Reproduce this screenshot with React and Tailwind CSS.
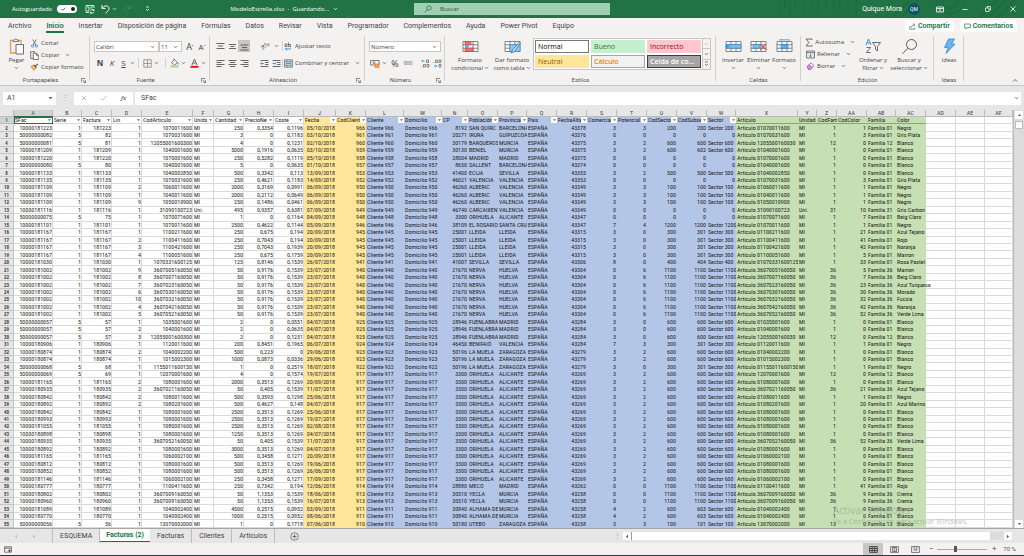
import React from "react";

const COLORS = {
  0: "Blanco", 1: "Negro", 3: "Gris Plata", 5: "Marron", 7: "Beig Claro", 9: "Crema",
  10: "Gris Carbon", 20: "Azul Marino", 21: "Azul Tejano", 23: "Azul Turquesa", 30: "Morado",
  32: "Fucsia", 33: "Rosa Pastel", 41: "Rojo", 42: "Naranja", 52: "Verde Lima",
};

// code: CP | city | province | date serial | comercial | potencial | sector | subsector
const CLIENTS = {
  966: "8192|SAN QUIRC|BARCELONA|43378|3|3|200|200",
  961: "20271|IRURA|GUIPUZCOA|43376|0|0|0|0",
  960: "30179|BARQUEROS|MURCIA|43375|3|2|600|600",
  959: "30130|BENIEL|MURCIA|43375|3|2|600|602",
  958: "28004|MADRID|MADRID|43375|0|0|0|0",
  957: "8650|SALLENT|BARCELONA|43374|0|0|0|0",
  953: "41400|ECIJA|SEVILLA|43355|3|2|500|500",
  952: "46021|VALENCIA|VALENCIA|43353|0|0|0|0",
  950: "46260|ALBERIC|VALENCIA|43349|3|3|100|100",
  949: "46740|CARCAIXENT|VALENCIA|43349|0|0|0|0",
  948: "3300|ORIHUELA|ALICANTE|43347|0|0|0|0",
  946: "38109|EL ROSARIO|SANTA CRUZ|43347|7|4|1200|1200",
  945: "25001|LLEIDA|LLEIDA|43315|3|0|300|301",
  941: "41007|SEVILLA|SEVILLA|43306|8|0|400|404",
  940: "21670|NERVA|HUELVA|43304|0|6|1100|1100",
  925: "28946|FUENLABRADA|MADRID|43284|3|0|600|600",
  924: "46450|BENIFAIÓ|VALENCIA|43284|7|3|300|301",
  923: "50196|LA MUELA|ZARAGOZA|43279|3|2|600|600",
  922: "50196|LA MUELA .|ZARAGOZA|43279|3|0|300|301",
  917: "3300|ORIHUELA|ALICANTE|43269|3|2|600|600",
  914: "28880|MECO|MADRID|43262|0|0|1100|1100",
  913: "30510|YECLA|MURCIA|43258|0|0|1100|1100",
  911: "30840|ALHAMA DE|MURCIA|43258|4|2|600|603",
  910: "50180|UTEBO|ZARAGOZA|43258|3|3|100|101",
};

// serie factura lin articulo cantidad precio coste fecha cliente familia color
const INVOICES = `1 181223 1 1070011600 250 0,3354 0,1196 05/10 966 1 1
5 82 1 1070031600 3 0 0,1183 03/10 961 1 3
5 81 1 12055001600300 4 0 0,1231 02/10 960 12 0
1 181209 1 1040001600 5000 0,1916 0,0635 03/10 959 1 0
1 181220 1 1070001600 250 0,5282 0,1119 05/10 958 1 0
5 80 1 1040001600 5 0 0,0635 01/10 957 1 0
1 181133 1 1040002850 500 0,3342 0,113 13/09 953 1 0
1 181135 1 1070031600 250 0,4621 0,1183 14/09 952 1 3
1 181109 2 1060011600 2000 0,3169 0,0991 06/09 950 1 1
1 181109 1 1040011600 2000 0,2112 0,0649 06/09 950 1 1
1 181109 9 1050010900 250 0,1486 0,0461 06/09 950 1 1
1 181116 1 31090100723 495 0,9357 0,6381 07/09 949 31 10
5 75 1 1070071600 1 0 0,1164 04/09 948 1 7
1 181101 1 1070011600 2500 0,4622 0,1144 05/09 946 1 1
1 181167 1 1100211600 250 0,675 0,194 20/09 945 1 21
1 181167 2 1100411600 250 0,7043 0,194 20/09 945 1 41
1 181167 3 1100421600 250 0,7043 0,1939 20/09 945 1 42
1 181167 4 1100051600 250 0,675 0,1759 20/09 945 1 5
1 181030 1 1070331600125 125 0,8146 0,1539 26/07 941 1 33
1 181002 9 3607005160050 50 0,9176 0,1539 23/07 940 36 5
1 181002 8 3607007160050 50 0,9176 0,1539 23/07 940 36 7
1 181002 7 3607023160050 50 0,9176 0,1539 23/07 940 36 23
1 181002 6 3607030160050 50 0,9176 0,1539 23/07 940 36 30
1 181002 10 3607032160050 50 0,9176 0,1539 23/07 940 36 32
1 181002 4 3607042160050 50 0,9176 0,1539 23/07 940 36 42
1 181002 5 3607052160050 50 0,9176 0,1539 23/07 940 36 52
5 57 1 1035001600 2 0 0,0551 04/07 925 1 0
5 57 2 1040001600 2 0 0,0635 04/07 925 1 0
5 57 3 12055001600300 2 0 0,1231 04/07 925 12 0
1 180906 1 1120011600 200 0,8451 0,1965 06/07 924 1 1
1 180874 2 1040002200 500 0,223 0 29/06 923 1 0
1 180874 1 1015002300 1000 0,0873 0,0336 29/06 923 1 0
5 68 1 1155011600150 1 0 0,2519 18/07 922 1 1
5 69 1 12070001600 4 0 0,1574 19/07 917 12 0
1 181165 2 1080001600 2000 0,3513 0,1269 20/09 917 1 0
1 180935 2 3607021160050 50 0,405 0,1539 11/07 917 36 21
1 180842 2 1080011600 500 0,3593 0,1298 25/06 917 1 1
1 180892 2 1080201600 500 0,4627 0,148 04/07 917 1 20
1 180842 1 1080001600 2500 0,3513 0,1269 25/06 917 1 0
1 180993 1 1080001600 2500 0,3513 0,1269 19/07 917 1 0
1 181055 1 1080001600 2500 0,3513 0,1269 02/08 917 1 0
1 180898 1 1080001600 1250 0,3513 0,1269 04/07 917 1 0
1 180935 1 3607052160050 50 0,405 0,1539 11/07 917 36 52
1 180892 1 1080001600 3000 0,3513 0,1269 04/07 917 1 0
1 181165 1 1060002100 500 0,3458 0,1271 20/09 917 1 0
1 180812 1 1080001600 500 0,3513 0,1269 19/06 917 1 0
1 180852 1 1080001600 500 0,3513 0,1269 26/06 917 1 0
1 181146 1 1060002100 250 0,3458 0,1271 17/09 917 1 0
1 180777 1 1100411600 250 0,7342 0,194 12/06 914 1 41
1 180802 1 3607009160050 50 1,1353 0,1539 18/06 913 36 9
1 180960 1 3607009160050 50 1,1353 0,1539 16/07 913 36 9
1 181089 1 1040002400 4500 0,2515 0,0952 03/09 911 1 0
1 180770 1 1040002400 1000 0,2515 0,0952 08/06 911 1 0
5 56 1 13070002000 1 0 0,1718 07/06 910 13 0`;

const ROWS = INVOICES.split("\n").map((line) => {
  const [serie, fac, lin, art, cant, precio, coste, fecha, cli, fam, col] = line.split(" ");
  const [cp, city, prov, alta, com, pot, sec, sub] = CLIENTS[cli].split("|");
  const unit = fam === "31" ? "Uni." : "MI";
  const full = fam === "1" ? "0" + art : art === "12055001600300" ? "1205500160030" : art;
  const sector = sub === "0" ? "0" : "Sector " + Math.floor(sub / 100) * 100;
  return [
    serie + fac.padStart(10, "0"), serie, fac, lin, art, unit, cant, precio, coste, fecha + "/2018", cli,
    "Cliente " + cli, "Domicilio " + cli, cp, city, prov, "ESPAÑA", alta, com, pot, sec, sub, sector,
    "Articulo " + full, unit, fam, col, "Familia " + fam.padStart(2, "0"), COLORS[col],
  ];
});

// letter, header, width, kind (n number / t text), fill
const COLS = [
  ["A", "SFac", 39, "n", "w"], ["B", "Serie", 29, "n", "w"], ["C", "Factura", 30, "n", "w"],
  ["D", "Lin", 30, "n", "w"], ["E", "CodArticulo", 51, "n", "w"], ["F", "Unidad", 21, "t", "w"],
  ["G", "Cantidad", 30, "n", "w"], ["H", "PrecioNeto", 30, "n", "w"], ["I", "Coste", 30, "n", "w"],
  ["J", "Fecha", 32, "n", "y"], ["K", "CodCliente", 30, "n", "y"],
  ["L", "Cliente", 38, "t", "b"], ["M", "Domicilio", 38, "t", "b"], ["N", "CP", 26, "n", "b"],
  ["O", "Población", 30, "t", "b"], ["P", "Provincia", 29, "t", "b"], ["Q", "Pais", 30, "t", "b"],
  ["R", "FechaAlta", 30, "n", "b"], ["S", "Comercial", 30, "n", "b"], ["T", "Potencial", 30, "n", "b"],
  ["U", "CodSector", 30, "n", "b"], ["V", "CodSubsector", 30, "n", "b"], ["W", "Sector", 29, "t", "b"],
  ["X", "Articulo", 62, "t", "g"], ["Y", "Unidad", 19, "t", "g"], ["Z", "CodFamilia", 20, "n", "g"],
  ["AA", "CodColor", 30, "n", "g"], ["AB", "Familia", 29, "t", "g"], ["AC", "Color", 30, "t", "g"],
  ["AD", "", 30, "t", "w"], ["AE", "", 29, "t", "w"], ["AF", "", 0, "t", "w"],
];

const FILL = {
  w: "border-r bg-white border-[#dadada]",
  y: "bg-[#ffe699] border-transparent",
  b: "bg-[#b4c6e7] border-transparent",
  g: "bg-[#c6e0b4] border-transparent",
};

const Svg = ({ w, h, children, className = "" }) => (
  <svg width={w} height={h} viewBox={`0 0 ${w} ${h}`} fill="none" stroke="#5b5b5b" className={"shrink-0 " + className} aria-hidden="true">
    {children}
  </svg>
);
const Caret = ({ color = "#555" }) => (
  <Svg w={5} h={4}><path d="M1 1.2l1.5 1.5L4 1.2" stroke={color} strokeWidth=".8" /></Svg>
);
const Sep = () => <span className="h-2.5 w-px shrink-0 bg-[#d4d2d0]" />;
const Lines = ({ d }) => <Svg w={9} h={9}><path d={d} stroke="#555" strokeWidth=".9" /></Svg>;

function Group({ label, className, launcher, children }) {
  return (
    <section className={"relative flex shrink-0 flex-col pt-0.5 " + className} aria-label={label}>
      <div className="flex flex-1 items-start">{children}</div>
      <div className="flex h-2.5 items-center font-[Roboto,sans-serif]">
        <span className="flex-1 text-center text-[6px] text-[#555]">{label}</span>
        {launcher && (
          <button aria-label={"Opciones de " + label} className="mr-1">
            <Svg w={5} h={5}><path d="M.5 4V.5H4M2 2l2.5 2.5M4.5 2.3v2.2H2.3" strokeWidth=".7" /></Svg>
          </button>
        )}
      </div>
      <span className="absolute top-0.5 right-0 bottom-1 w-px bg-[#d2d0ce]" />
    </section>
  );
}

const Big = ({ icon, l1, l2, caret, className }) => (
  <button className={"flex flex-col items-center pt-0.5 leading-2 " + className}>
    <span className="flex h-4 items-center">{icon}</span>
    <span className="pt-0.5 whitespace-nowrap">{l1}</span>
    <span className="flex h-2 items-center gap-px whitespace-nowrap">{l2}{caret && <Caret />}</span>
  </button>
);
const Small = ({ icon, label, caret, className = "" }) => (
  <button className={"flex h-3 items-center gap-0.5 whitespace-nowrap " + className}>
    <span className="flex w-2.5 justify-center">{icon}</span>{label}{caret && <span className="pl-1"><Caret /></span>}
  </button>
);
const IconBtn = ({ label, children, className = "" }) => (
  <button aria-label={label} className={"flex items-center justify-center " + className}>{children}</button>
);

const GridIcon = ({ children }) => (
  <Svg w={17} h={15}>
    <path d="M1 2.5h15v10H1zM1 5.8h15M1 9.2h15M6 2.5v10M11 2.5v10" fill="#fff" stroke="#666" strokeWidth=".8" />
    {children}
  </Svg>
);

function TitleBar() {
  return (
    <header className="relative grid h-[18px] shrink-0 grid-cols-[1fr_196px_1fr] items-center bg-[#217346] text-[7px] text-white">
      <svg className="absolute top-0 right-0 h-full w-[250px]" viewBox="0 0 250 18" fill="none" stroke="#1e6c41" aria-hidden="true">
        <path d="M6 0v14M11 0v9M16 0v15M21 0v8M30 0v16M38 0v10M44 0v14M52 0v8M60 0v12M66 0v7M74 0v13M82 0v16" strokeWidth="2" />
        <path d="M118 18l18-18M126 18l18-18M162 0a14 14 0 0 0 28 0M168 0a8 8 0 0 0 16 0M205 18l18-18M214 18l18-18M223 18l18-18" strokeWidth="2" />
      </svg>
      <div className="relative flex items-center pl-3">
        <label htmlFor="autosave" className="w-[45px] font-['Open_Sans',sans-serif] text-[6px]">Autoguardado</label>
        <span className="relative flex h-2 w-5 items-center rounded-full bg-white">
          <input id="autosave" type="checkbox" defaultChecked className="absolute inset-0 h-full w-full appearance-none rounded-full" />
          <Svg w={20} h={8}><path d="M4.5 4l1.300 1.300L8.300 2.800" stroke="#217346" strokeWidth=".9" /><circle cx="16" cy="4" r="2" fill="#222" stroke="none" /></Svg>
        </span>
        <IconBtn label="Guardar" className="ml-2">
          <Svg w={10} h={10}><path d="M9 4V1.500H1v7h3M3 1.500V4h4V1.500M3 8V6h2M5.500 6.500a2 2 0 0 1 3.500 0M9 8a2 2 0 0 1-3.500.5M9 5v1.500H7.500M5.300 9.700V8.300H7" stroke="#fff" strokeWidth=".8" /></Svg>
        </IconBtn>
        <IconBtn label="Deshacer" className="ml-1.5 gap-0.5">
          <Svg w={9} h={10}><path d="M1 1v3.500h3.500M1.200 4.300C3 2 5 1.300 6.700 2.300c2 1.300 1.500 3.700-.2 5.200L4.500 9.200" stroke="#fff" /></Svg><Caret color="#fff" />
        </IconBtn>
        <IconBtn label="Rehacer" className="ml-1.5 gap-0.5">
          <Svg w={9} h={10}><path d="M8 1v3.500H4.500M7.800 4.300C6 2 4 1.300 2.300 2.300c-2 1.300-1.500 3.700.2 5.200l2 1.700" stroke="#3d845c" /></Svg><Caret color="#3d845c" />
        </IconBtn>
        <IconBtn label="Personalizar" className="ml-1.5">
          <Svg w={5} h={6}><path d="M1 1h3M1 3l1.500 1.500L4 3" stroke="#fff" strokeWidth=".8" /></Svg>
        </IconBtn>
        <button className="mr-[76px] ml-auto flex items-center gap-1 font-['Open_Sans',sans-serif] text-[6px] whitespace-nowrap">ModeloEstrella.xlsx&nbsp; - &nbsp;Guardando... <Caret color="#fff" /></button>
      </div>
      <div className="relative flex h-3 items-center bg-[#a0cfb4]">
        <Svg w={8} h={8} className="ml-2.5"><circle cx="5" cy="3" r="2.200" stroke="#217346" strokeWidth=".8" /><path d="M3.400 4.600L.8 7.200" stroke="#217346" strokeWidth=".8" /></Svg>
        <input aria-label="Buscar" placeholder="Buscar" className="ml-2 h-3 w-full bg-transparent font-['Open_Sans',sans-serif] text-[6px] outline-none placeholder:text-[#1d5c39]" />
      </div>
      <div className="relative flex items-center justify-end">
        <span className="whitespace-nowrap">Quique Mora</span>
        <span className="ml-1.5 flex h-3 w-3 items-center justify-center rounded-full bg-[#0b556a] text-[5px]">QM</span>
        <IconBtn label="Presentación de la cinta" className="w-9 pl-1"><Svg w={8} h={7}><path d="M.5 1h7v5h-7zM.5 2.500h7M4 5.500V3.500M3 4.500l1-1 1 1" stroke="#fff" strokeWidth=".8" /></Svg></IconBtn>
        <IconBtn label="Minimizar" className="w-[18px]"><Svg w={6} h={6}><path d="M.5 3.500h5" stroke="#fff" strokeWidth=".8" /></Svg></IconBtn>
        <IconBtn label="Restaurar" className="w-7"><Svg w={6} h={6}><path d="M.5 2h3.500v3.500H.5zM2 2V.5h3.500V4H4" stroke="#fff" strokeWidth=".7" /></Svg></IconBtn>
        <IconBtn label="Cerrar" className="w-[22px]"><Svg w={6} h={6}><path d="M.5.5l5 5M5.500.5l-5 5" stroke="#fff" strokeWidth=".8" /></Svg></IconBtn>
      </div>
    </header>
  );
}

const TABS = ["Archivo", "Inicio", "Insertar", "Disposición de página", "Fórmulas", "Datos", "Revisar", "Vista", "Programador", "Complementos", "Ayuda", "Power Pivot", "Equipo"];

function RibbonTabs() {
  return (
    <nav className="flex h-4 shrink-0 items-center pr-[7px] pl-2 text-[7px] text-[#444]">
      <div className="flex flex-1 gap-[15px]">
        {TABS.map((t) => (
          <button key={t} className={"h-3.5 border-b-2 pt-0.5 leading-2 whitespace-nowrap " + (t === "Inicio" ? "border-[#217346] font-semibold text-[#217346]" : "border-transparent")}>{t}</button>
        ))}
      </div>
      <button className="mr-1.5 flex h-3 items-center gap-0.5 rounded-sm bg-white px-1 font-semibold text-[#217346]">
        <Svg w={7} h={7}><path d="M.8 3v3.200h5V4.500M2.500 4.500c0-2 1-2.700 3-2.700M4.500.5L6 1.800 4.500 3.200" stroke="#217346" strokeWidth=".7" /></Svg>Compartir
      </button>
      <button className="flex h-3 items-center gap-0.5 rounded-sm bg-white px-1 font-semibold text-[#217346]">
        <Svg w={7} h={7}><path d="M.6 1h5.800v3.700H3L1.800 6V4.700H.6z" stroke="#217346" strokeWidth=".7" /></Svg>Comentarios
      </button>
    </nav>
  );
}

const selectCls = "h-[11px] appearance-none border border-[#c8c6c4] bg-white pl-px text-[6px] leading-2 text-[#444] outline-none";
function Select({ label, value, className }) {
  return (
    <span className={"relative flex " + className}>
      <select aria-label={label} className={selectCls + " w-full"}><option>{value}</option></select>
      <span className="pointer-events-none absolute top-1 right-1"><Caret /></span>
    </span>
  );
}

function Style({ children, className }) {
  return <button className={"h-[13px] overflow-hidden border px-0.5 text-left text-[7px] leading-2 whitespace-nowrap " + className}>{children}</button>;
}

function Ribbon() {
  return (
    <div className="relative flex h-[52px] shrink-0 border-b border-[#c8c6c4] font-['Open_Sans','Noto_Sans',sans-serif] text-[6px] text-[#444]">
      <Group label="Portapapeles" launcher className="w-[90px]">
        <Big className="w-[29px] pl-1" l1="Pegar" caret icon={
          <Svg w={16} h={17}><path d="M3.500 2.500H1.500v12.500h5M9.500 2.500h2.500v3" stroke="#e2a03f" strokeWidth="1.300" /><path d="M4 3.500V2h1.500a1.300 1.300 0 0 1 2.500 0H9.500v1.500z" fill="#fff" strokeWidth=".8" /><path d="M7 6.500h7.500v9.500H7z" fill="#fff" strokeWidth=".9" /></Svg>} />
        <div className="flex flex-col pt-px">
          <Small label="Cortar" icon={<Svg w={7} h={9}><path d="M1.800.5l3 5.500M5.200.5l-3 5.500" strokeWidth=".8" /><circle cx="1.600" cy="7" r="1.200" stroke="#2b88d8" strokeWidth=".8" /><circle cx="5.400" cy="7" r="1.200" stroke="#2b88d8" strokeWidth=".8" /></Svg>} />
          <Small label="Copiar" caret icon={<Svg w={9} h={9}><path d="M3 7.500H.7V.7h4v1" strokeWidth=".8" /><path d="M3.300 2h3l2 2v4.500h-5zM6.200 2v2.200h2" fill="#fff" strokeWidth=".8" /></Svg>} />
          <Small label="Copiar formato" icon={<Svg w={9} h={8}><path d="M.8 3.500l3-1.500 2.200 3-2 2.500z" fill="#f4b860" stroke="#d08a2c" strokeWidth=".7" /><path d="M4 1.800l2.500 3M5.500 3L8 .8" strokeWidth="1.100" /></Svg>} />
        </div>
      </Group>

      <Group label="Fuente" launcher className="w-[120px]">
        <div className="flex flex-col gap-[5px] pt-[5px] pl-1">
          <div className="flex items-center">
            <Select label="Fuente" value="Calibri" className="w-[65px]" />
            <Select label="Tamaño" value="11" className="w-[23px]" />
            <IconBtn label="Aumentar tamaño" className="ml-0.5 w-3 text-[9px] leading-2">A<span className="text-[5px]">ˆ</span></IconBtn>
            <IconBtn label="Disminuir tamaño" className="w-3 text-[8px] leading-2">A<span className="text-[5px]">ˇ</span></IconBtn>
          </div>
          <div className="flex h-3 items-center text-[8px]">
            <IconBtn label="Negrita" className="w-3 font-bold">N</IconBtn>
            <IconBtn label="Cursiva" className="w-3 italic">K</IconBtn>
            <IconBtn label="Subrayado" className="w-5 gap-1"><span className="underline">S</span><Caret /></IconBtn>
            <Sep />
            <IconBtn label="Bordes" className="ml-0.5 w-5 gap-0.5"><Svg w={9} h={9}><path d="M.8.8h7.400v7.400H.8zM4.500.8v7.400M.8 4.500h7.400" stroke="#888" strokeWidth=".8" /></Svg><Caret /></IconBtn>
            <span className="w-1" /><Sep />
            <IconBtn label="Color de relleno" className="ml-0.5 w-5 gap-0.5"><Svg w={9} h={10}><path d="M1.500 4.500L4.500 1.500l3 3-3 2.700zM4 2V.5" strokeWidth=".8" /><path d="M8 4.500v2" stroke="#2b88d8" /><path d="M.5 8.500h8" stroke="#a9d18e" strokeWidth="2" /></Svg><Caret /></IconBtn>
            <IconBtn label="Color de fuente" className="w-5 gap-0.5"><Svg w={9} h={10}><path d="M2 7l2.500-6L7 7M2.900 5h3.200" strokeWidth=".9" /><path d="M.5 8.800h8" stroke="#e81123" strokeWidth="2" /></Svg><Caret /></IconBtn>
          </div>
        </div>
      </Group>

      <Group label="Alineación" launcher className="w-[155px]">
        <div className="flex flex-col gap-[3px] pt-1 pl-1">
          <div className="flex h-3 items-center">
            <IconBtn label="Alinear arriba" className="w-3"><Lines d="M.5 1.500h8M2 4h5M.5 6.500h8" /></IconBtn>
            <IconBtn label="Alinear al medio" className="w-3"><Lines d="M1 2.500h7M2.500 4.500h4M1 6.500h7" /></IconBtn>
            <IconBtn label="Alinear abajo" className="h-3 w-3 bg-[#c8c6c4]"><Lines d="M.5 3h8M2 5.500h5M.5 8h8" /></IconBtn>
            <span className="ml-1"><Sep /></span>
            <IconBtn label="Orientación" className="ml-1 w-6 gap-1"><Svg w={9} h={9}><path d="M1 8l7-6M5.500 2H8v2.500" stroke="#888" strokeWidth=".8" /><path d="M1.500 3.500a1 1 0 1 0 1 1.500V3M4 1v2.500" strokeWidth=".8" /></Svg><Caret /></IconBtn>
            <Sep />
            <Small label="Ajustar texto" icon={<Svg w={8} h={9}><path d="M1 2h2v2.500H1zM4.500.5v4h2V2.500h-2" strokeWidth=".8" /><path d="M.8 7h5.500V5.500M3 5.800L1.800 7 3 8.300" stroke="#2b88d8" strokeWidth=".8" /></Svg>} />
          </div>
          <div className="flex h-4 items-center">
            <IconBtn label="Izquierda" className="w-3"><Lines d="M.5 1.500h8M.5 3.500h5M.5 5.500h8M.5 7.500h5" /></IconBtn>
            <IconBtn label="Centrar" className="w-3"><Lines d="M.5 1.500h8M2 3.500h5M.5 5.500h8M2 7.500h5" /></IconBtn>
            <IconBtn label="Derecha" className="w-3"><Lines d="M.5 1.500h8M3.500 3.500h5M.5 5.500h8M3.500 7.500h5" /></IconBtn>
            <span className="ml-1"><Sep /></span>
            <IconBtn label="Disminuir sangría" className="ml-1 w-3"><Svg w={9} h={9}><path d="M.5 1.500h8M5 3.500h3.500M5 5.500h3.500M.5 7.500h8" strokeWidth=".9" /><path d="M4 4.500H.7M2 3.300L.7 4.500 2 5.700" stroke="#2b88d8" strokeWidth=".8" /></Svg></IconBtn>
            <IconBtn label="Aumentar sangría" className="w-3"><Svg w={9} h={9}><path d="M.5 1.500h8M5 3.500h3.500M5 5.500h3.500M.5 7.500h8" strokeWidth=".9" /><path d="M.5 4.500h3.500M2.700 3.300L4 4.500 2.700 5.700" stroke="#2b88d8" strokeWidth=".8" /></Svg></IconBtn>
            <Sep />
            <Small label="Combinar y centrar" caret icon={<Svg w={9} h={9}><path d="M.6.8h7.800v7.400H.6zM.6 2.800h7.800M.6 6.200h7.800M3 .8v2M6 .8v2M3 6.200v2M6 6.200v2" strokeWidth=".7" /><path d="M1 3h7v3H1z" fill="#9bd0f5" stroke="none" /><path d="M2 4.500h5" stroke="#2b88d8" strokeWidth=".8" /></Svg>} />
          </div>
        </div>
      </Group>

      <Group label="Número" launcher className="w-20">
        <div className="flex flex-col gap-[5px] pt-[5px] pl-1">
          <Select label="Formato de número" value="Número" className="w-[72px]" />
          <div className="flex h-3 items-center">
            <IconBtn label="Moneda" className="w-[18px] gap-0.5"><Svg w={10} h={9}><path d="M.6 1.500h8.500v4.500H.6z" strokeWidth=".8" /><circle cx="4" cy="3.700" r="1" strokeWidth=".7" /><path d="M5 5h4v3.500H5z" fill="#f4a261" stroke="#d9792b" strokeWidth=".6" /></Svg><Caret /></IconBtn>
            <IconBtn label="Porcentaje" className="w-4 text-[9px]">%</IconBtn>
            <IconBtn label="Millares" className="w-2.5 text-[5px]">000</IconBtn>
            <span className="ml-0.5"><Sep /></span>
            <IconBtn label="Aumentar decimales" className="ml-1 w-3"><Svg w={9} h={9}><path d="M3.500 2H.8M2 .9L.8 2 2 3.100" stroke="#2b88d8" strokeWidth=".8" /><path d="M5.500 1h2v2.500h-2zM2.500 5.500h2V8h-2zM6 5.500h2V8H6zM1 7.500v.8" strokeWidth=".7" /></Svg></IconBtn>
            <IconBtn label="Disminuir decimales" className="w-3"><Svg w={9} h={9}><path d="M.8 7h3M2.600 5.900L3.800 7 2.600 8.100" stroke="#2b88d8" strokeWidth=".8" /><path d="M6 5.500h2V8H6zM2.500 1h2v2.500h-2zM6 1h2v2.500H6zM1 3v.8" strokeWidth=".7" /></Svg></IconBtn>
          </div>
        </div>
      </Group>

      <Group label="Estilos" className="w-[271px]">
        <Big className="ml-1 w-[42px]" l1="Formato" l2="condicional" caret icon={
          <GridIcon><path d="M3 2.500h6v3.300H3zM3 9.200h8v3.300H3z" fill="#f26b7a" stroke="#d13438" strokeWidth=".6" /><path d="M3 5.800h3v3.400H3z" fill="#5aa9e6" stroke="none" /></GridIcon>} />
        <Big className="w-[42px]" l1="Dar formato" l2="como tabla" caret icon={
          <GridIcon><path d="M6 5.800h10v6.700H6z" fill="#8cc8f0" stroke="#2b88d8" strokeWidth=".6" /><path d="M15.500 3L9 10.500l-2 3.500 3.500-1.500L16.500 4z" fill="#cfe6f7" stroke="#2b6ca8" strokeWidth=".8" /></GridIcon>} />
        <div className="mt-0.5 flex border border-[#c8c6c4] bg-white">
          <div className="grid w-[168px] grid-cols-3 gap-0.5 p-px">
            <Style className="border-[#777] text-black">Normal</Style>
            <Style className="border-[#c6efce] bg-[#c6efce] text-[#2e7d32]">Bueno</Style>
            <Style className="border-[#ffc7ce] bg-[#ffc7ce] text-[#9c0006]">Incorrecto</Style>
            <Style className="border-[#ffe699] bg-[#ffe699] text-[#9c5700]">Neutral</Style>
            <Style className="border-[#a5a5a5] bg-[#f2f2f2] font-semibold text-[#fa7d00]">Cálculo</Style>
            <Style className="border-[#3f3f3f] bg-[#a5a5a5] font-semibold text-white">Celda de co...</Style>
          </div>
          <div className="flex w-2 flex-col divide-y divide-[#c8c6c4] border-l border-[#c8c6c4] bg-[#f3f2f1]">
            <IconBtn label="Subir" className="flex-1"><Svg w={5} h={4}><path d="M1 2.800l1.500-1.500L4 2.800" stroke="#bbb" strokeWidth=".8" /></Svg></IconBtn>
            <IconBtn label="Bajar" className="flex-1"><Caret /></IconBtn>
            <IconBtn label="Más" className="flex-1"><Svg w={5} h={6}><path d="M1 1h3M1 3l1.500 1.500L4 3" strokeWidth=".8" /></Svg></IconBtn>
          </div>
        </div>
      </Group>

      <Group label="Celdas" className="w-[85px]">
        <Big className="ml-1 w-[26px]" l1="Insertar" caret icon={<GridIcon><path d="M2 5.500h14v3.700H2z" fill="#7cc0f0" stroke="#2b88d8" strokeWidth=".7" /><path d="M5 7.300H.8M2.500 5.500L.8 7.300l1.700 1.800" stroke="#2b88d8" strokeWidth=".9" /></GridIcon>} />
        <Big className="w-[25px]" l1="Eliminar" caret icon={<GridIcon><path d="M3 5.500h7v3.700H3z" fill="#7cc0f0" stroke="#2b88d8" strokeWidth=".7" /><path d="M10.500 5l5.500 6M16 5l-5.500 6" stroke="#e04343" strokeWidth="1.100" /></GridIcon>} />
        <Big className="w-[26px]" l1="Formato" caret icon={<GridIcon><path d="M5 5.500h7v4H5z" fill="#5aa9e6" stroke="#2b88d8" strokeWidth=".7" /><path d="M4 .8h9M4 0v1.800M13 0v1.800" stroke="#2b88d8" strokeWidth=".7" /></GridIcon>} />
      </Group>

      <Group label="Edición" className="w-[133px]">
        <div className="flex w-[54px] flex-col pl-1">
          <Small label="Autosuma" caret icon={<Svg w={8} h={9}><path d="M7 2V1H1l3 3.500L1 8h6V7" strokeWidth=".9" /></Svg>} />
          <Small label="Rellenar" caret icon={<Svg w={9} h={9}><path d="M.6 1h7.800v7H.6zM.6 2.700h7.800" strokeWidth=".8" /><path d="M4.500 3.500v3.500M3 5.500L4.500 7 6 5.500" stroke="#2b88d8" strokeWidth=".9" /></Svg>} />
          <Small label="Borrar" caret icon={<Svg w={9} h={8}><path d="M1 4.800L5 .9l3 2.800-4 3.800H2.700z" fill="#fff" stroke="#a64ca6" strokeWidth=".8" /><path d="M1 4.800l2.300-2.200 3 2.800L4 7.500H2.700z" fill="#d48fd4" stroke="#a64ca6" strokeWidth=".6" /></Svg>} />
        </div>
        <Big className="w-[36px]" l1="Ordenar y" l2="filtrar" caret icon={
          <Svg w={16} h={16}><path d="M1 7l2.500-6L6 7M1.900 5h3.200" stroke="#2b88d8" strokeWidth=".9" /><path d="M1.500 9.500h4l-4 5h4" strokeWidth=".9" /><path d="M7.500 4.500h8L12.500 8.500V13L10.500 11.500V8.500z" strokeWidth=".9" /></Svg>} />
        <Big className="w-[36px]" l1="Buscar y" l2="seleccionar" caret icon={
          <Svg w={17} h={17}><circle cx="10.500" cy="6.500" r="5" strokeWidth="1" /><path d="M7 10.200L1.500 15.700" strokeWidth="1" /></Svg>} />
      </Group>

      <Group label="Ideas" className="w-[30px]">
        <Big className="w-full" l1="Ideas" icon={<Svg w={13} h={17}><path d="M5.500 1h6L8.500 6h3.500L3 15.500 5.300 9.500H1.500z" fill="#6bb5ee" stroke="#2b88d8" strokeWidth=".8" /></Svg>} />
      </Group>
      <div className="flex flex-1 items-end justify-end pr-1.5 pb-0.5">
        <IconBtn label="Contraer la cinta"><Svg w={6} h={5}><path d="M1 3.500l2-2 2 2" strokeWidth=".9" /></Svg></IconBtn>
      </div>
    </div>
  );
}

function FormulaBar() {
  return (
    <div className="flex h-6 shrink-0 items-center pr-[3px] pl-[3px] text-[7px] text-[#444]">
      <span className="relative flex w-[53px]">
        <input aria-label="Cuadro de nombres" defaultValue="A1" className="h-[13px] w-full bg-white pl-1 outline-none" />
        <span className="pointer-events-none absolute top-1 right-[3px]"><Svg w={5} h={4}><path d="M.5 1h4L2.500 3.300z" fill="#666" stroke="none" /></Svg></span>
      </span>
      <span className="w-[18px] text-center text-[#aaa]">⋮</span>
      <div className="flex h-[13px] w-[59px] items-center justify-around bg-white">
        <IconBtn label="Cancelar"><Svg w={6} h={6}><path d="M.8.8l4.400 4.400M5.200.8L.8 5.200" stroke="#bbb" strokeWidth=".9" /></Svg></IconBtn>
        <IconBtn label="Introducir"><Svg w={7} h={6}><path d="M.8 3.200l2 2L6.300 1" stroke="#bbb" strokeWidth=".9" /></Svg></IconBtn>
        <IconBtn label="Insertar función" className="font-serif italic">fx</IconBtn>
      </div>
      <span className="relative ml-0.5 flex flex-1">
        <input aria-label="Barra de fórmulas" defaultValue="SFac" className="h-[13px] w-full bg-white pl-1.5 outline-none" />
        <span className="pointer-events-none absolute top-1 right-0.5"><Caret /></span>
      </span>
    </div>
  );
}

function Sheet() {
  return (
    <div className="min-w-0 flex-1 overflow-hidden">
      <table className="h-full w-full table-fixed border-separate border-spacing-0 font-['Roboto_Condensed',Roboto,Arial,sans-serif] text-[6px] leading-[6px] text-[#1c1c1c]">
        <colgroup>
          <col className="w-3.5" />
          {COLS.map(([l, , w]) => <col key={l} style={w ? { width: w } : undefined} />)}
        </colgroup>
        <thead>
          <tr>
            <td className="border-r border-b border-[#bbb] bg-[#e6e6e6]" />
            {COLS.map(([l]) => (
              <th key={l} scope="col" className={"border-r border-b p-0 font-normal " + (l === "A" ? "border-[#bbb] border-b-[#217346] bg-[#d2d2d2] text-[#217346]" : "border-[#bbb] bg-[#e6e6e6] text-[#444]")}>{l}</th>
            ))}
          </tr>
        </thead>
        <tbody>
          <tr>
            <th scope="row" className="border-r border-b border-[#bbb] bg-[#d2d2d2] p-0 text-[5px] text-[#217346]">1</th>
            {COLS.map(([l, head, , , fill], i) => (
              <td key={l} className={"border-b p-0 " + FILL[fill] + (l === "A" ? " outline outline-[#217346] -outline-offset-1" : "") + (fill === "g" ? " border-b-[#8aa57a]" : "")}>
                <div className="flex items-center overflow-hidden whitespace-nowrap">
                  <span className="min-w-0 flex-1 overflow-hidden pl-px">{head}</span>
                  {i < 23 && (
                    <button aria-label={"Filtrar " + head} className="flex h-[6px] w-[6px] shrink-0 items-center justify-center bg-white">
                      <Svg w={5} h={4}><path d="M1 1.200h3L2.500 3z" fill="#666" stroke="none" /></Svg>
                    </button>
                  )}
                </div>
              </td>
            ))}
          </tr>
          {ROWS.map((row, r) => (
            <tr key={r}>
              <th scope="row" className="border-r border-b border-[#c4c4c4] bg-[#e6e6e6] p-0 text-[5px] text-[#444]">{r + 2}</th>
              {COLS.map(([l, , , kind, fill], c) => {
                const v = row[c];
                const right = kind === "n" || v === "0";
                return (
                  <td key={l} className={"border-b p-0 whitespace-nowrap " + FILL[fill] + (l === "AC" ? "" : " overflow-hidden") + (right ? (fill === "w" ? " text-right" : " pr-px text-right") : " pl-px")}>{v}</td>
                );
              })}
            </tr>
          ))}
        </tbody>
      </table>
    </div>
  );
}

function SheetTabs() {
  const tab = "flex h-full items-center px-[7px] border-r border-[#bbb]";
  return (
    <footer className="flex h-[15px] shrink-0 items-center border-t border-[#a6a6a6] bg-[#e6e6e6] text-[7px] text-[#444]">
      <IconBtn label="Hoja anterior" className="w-8"><Svg w={4} h={5}><path d="M3 .8v3.400L1 2.500z" fill="#bbb" stroke="none" /></Svg></IconBtn>
      <IconBtn label="Hoja siguiente"><Svg w={4} h={5}><path d="M1 .8v3.400l2-1.700z" fill="#bbb" stroke="none" /></Svg></IconBtn>
      <div className="ml-4 flex h-full border-l border-[#bbb]">
        <button className={tab}>ESQUEMA</button>
        <button className="flex h-[13px] items-center border-b border-[#217346] bg-white px-1.5 font-bold text-[#217346]">Facturas (2)</button>
        <button className={tab}>Facturas</button>
        <button className={tab}>Clientes</button>
        <button className={tab}>Articulos</button>
      </div>
      <IconBtn label="Hoja nueva" className="ml-[15px]"><Svg w={9} h={9}><circle cx="4.500" cy="4.500" r="3.800" strokeWidth=".7" /><path d="M4.500 2.500v4M2.500 4.500h4" strokeWidth=".8" /></Svg></IconBtn>
      <div className="ml-auto flex w-[40%] items-center">
        <span className="w-[9px] text-[#999]">⋮</span>
        <IconBtn label="Desplazar a la izquierda" className="h-2 w-2 bg-white"><Svg w={4} h={5}><path d="M3 .8v3.400L1 2.500z" fill="#555" stroke="none" /></Svg></IconBtn>
        <span className="h-2 flex-1 border-l border-[#999] bg-white" />
        <span className="h-2 w-3.5 bg-[#dcdcdc]" />
        <IconBtn label="Desplazar a la derecha" className="mr-3 h-2 w-2 bg-white"><Svg w={4} h={5}><path d="M1 .8v3.400l2-1.700z" fill="#555" stroke="none" /></Svg></IconBtn>
      </div>
    </footer>
  );
}

function StatusBar() {
  return (
    <div className="flex h-[13px] shrink-0 items-center border-b border-[#2b3a42] bg-[#f3f2f1] pl-1 text-[6px] text-[#555]">
      <IconBtn label="Grabar macro"><Svg w={8} h={7}><path d="M.6.8h6.800v5.400H.6zM.6 2.200h6.800" strokeWidth=".8" /><circle cx="5.500" cy="4.800" r="1.200" fill="#555" stroke="none" /></Svg></IconBtn>
      <div className="ml-auto flex h-full items-center pr-2">
        <IconBtn label="Normal" className="h-full w-5 bg-[#c8c6c4]"><Svg w={9} h={7}><path d="M.6.6h7.800v5.800H.6zM.6 2.500h7.800M.6 4.500h7.800M3.200.6v5.800M5.800.6v5.800" stroke="#333" strokeWidth=".8" /></Svg></IconBtn>
        <IconBtn label="Diseño de página" className="w-[22px]"><Svg w={9} h={7}><path d="M.6.6h7.800v5.800H.6zM2.500 1.500h4v4h-4zM3.500 2.700h2M3.500 4.200h2" strokeWidth=".8" /></Svg></IconBtn>
        <IconBtn label="Salto de página" className="w-5"><Svg w={9} h={7}><path d="M.6.6h7.800v5.800H.6zM3.200.6v3.500h2.600V.6" strokeWidth=".8" /></Svg></IconBtn>
        <IconBtn label="Alejar" className="w-3 text-[8px]">−</IconBtn>
        <input aria-label="Zoom" type="range" min="10" max="100" defaultValue="42" className="h-2 w-[50px] appearance-none bg-[linear-gradient(#aaa,#aaa)] bg-[length:100%_1px] bg-center bg-no-repeat [&::-webkit-slider-thumb]:h-1.5 [&::-webkit-slider-thumb]:w-[3px] [&::-webkit-slider-thumb]:appearance-none [&::-webkit-slider-thumb]:bg-[#555]" />
        <IconBtn label="Acercar" className="w-3.5 text-[8px]">+</IconBtn>
        <span className="pl-0.5">70 %</span>
      </div>
    </div>
  );
}

export default function App() {
  return (
    <div className="flex h-screen flex-col overflow-hidden bg-[#e6e6e6] font-[Roboto,'Open_Sans',sans-serif] leading-none">
      <TitleBar />
      <div className="shrink-0 bg-[#f3f2f1]">
        <RibbonTabs />
        <Ribbon />
      </div>
      <FormulaBar />
      <main className="relative flex min-h-0 flex-1">
        <Sheet />
        <div className="flex w-[11px] shrink-0 flex-col items-center border-l border-[#bbb] bg-[#dcdcdc] pt-px">
          <IconBtn label="Subir" className="h-2 w-2 bg-white"><Svg w={5} h={4}><path d="M1 3h3L2.500 1z" fill="#555" stroke="none" /></Svg></IconBtn>
          <span className="mt-0.5 h-2 w-2 border border-[#bbb] bg-white" />
          <IconBtn label="Bajar" className="mt-auto h-2 w-2 bg-white"><Svg w={5} h={4}><path d="M1 1h3L2.500 3z" fill="#555" stroke="none" /></Svg></IconBtn>
        </div>
        <div className="pointer-events-none absolute right-11 bottom-0 w-[147px] font-['Open_Sans',sans-serif] whitespace-nowrap text-[#8f9a90]/60">
          <p className="text-[10px] leading-3">Activar Windows</p>
          <p className="text-[7px] leading-3">Ve a Configuración para activar Windows.</p>
        </div>
      </main>
      <SheetTabs />
      <StatusBar />
    </div>
  );
}
